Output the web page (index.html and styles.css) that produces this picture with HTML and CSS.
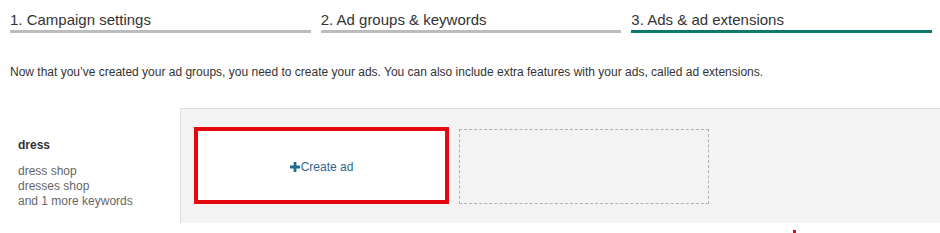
FILE: index.html
```html
<!DOCTYPE html>
<html lang="en">

<head>
    <meta charset="UTF-8">
    <meta name="viewport" content="width=device-width, initial-scale=1.0">
    <title>Ads &amp; ad extensions</title>
    <link rel="stylesheet" href="styles.css">
</head>

<body>
    <!-- start steps -->
    <div class="steps">
        <div class="step">1. Campaign settings</div>
        <div class="step">2. Ad groups &amp; keywords</div>
        <div class="step active">3. Ads &amp; ad extensions</div>
    </div>
    <!-- end steps -->

    <p class="intro">Now that you&rsquo;ve created your ad groups, you need to create your ads. You can also include extra features with your ads, called ad extensions.</p>

    <!-- start ad group row -->
    <div class="group-row">
        <div class="group-info">
            <div class="group-name">dress</div>
            <div class="keywords">
                dress shop<br>
                dresses shop<br>
                and 1 more keywords
            </div>
        </div>
        <div class="ad-panel">
            <div class="ad-card create">
                <span class="create-link">
                    <svg class="plus" width="10" height="10" viewBox="0 0 10 10">
                        <path d="M3.6 0h2.8v3.6H10v2.8H6.4V10H3.6V6.4H0V3.6h3.6z" fill="#1f6a94" />
                    </svg>Create ad
                </span>
            </div>
            <div class="ad-card empty"></div>
        </div>
    </div>
    <!-- end ad group row -->

    <span class="arrow-tip"></span>
</body>

</html>
```

FILE: styles.css
```css
* {
  box-sizing: border-box;
  font-family: Arial, 'Liberation Sans', sans-serif;
}

body {
  margin: 0;
  padding: 0 8px 0 10px;
  color: #333;
  background: #fff;
  position: relative;
  height: 233px;
  overflow: hidden;
}

.steps {
  display: flex;
  gap: 10px;
  width: 922px;
  padding-top: 11px;
}

.step {
  flex: 1;
  font-size: 15px;
  line-height: 18px;
  color: #333;
  padding-bottom: 1px;
  border-bottom: 3px solid #bcbcbc;
}

.step.active {
  border-bottom-color: #0b7a6b;
}

.intro {
  margin: 32px 0 0 0;
  font-size: 12px;
  line-height: 14px;
  color: #333;
}

.group-row {
  display: flex;
  margin-top: 29px;
  margin-left: -10px;
  margin-right: -8px;
}

.group-info {
  width: 180px;
  padding: 30px 0 0 18px;
}

.group-name {
  font-size: 12px;
  font-weight: bold;
  line-height: 14px;
  color: #333;
}

.keywords {
  margin-top: 12px;
  font-size: 12px;
  line-height: 15px;
  color: #666;
}

.ad-panel {
  flex: 1;
  height: 115px;
  background: #f3f3f3;
  border-top: 1px solid #dedede;
  border-left: 1px solid #dedede;
  display: flex;
  align-items: flex-start;
  gap: 10px;
  padding: 18px 0 0 13px;
}

.ad-card {
  width: 250px;
  height: 75px;
}

.ad-card.create {
  width: 255px;
  height: 77px;
  background: #fff;
  border: 4px solid #e4080c;
  display: flex;
  align-items: center;
  justify-content: center;
  padding-top: 2px;
}

.ad-card.empty {
  margin-top: 2px;
  border: 1px dashed #b0b0b0;
}

.create-link {
  font-size: 12px;
  color: #2f6890;
  display: inline-flex;
  align-items: center;
  cursor: pointer;
}

.plus {
  margin-right: 1px;
}

.arrow-tip {
  position: absolute;
  left: 793px;
  top: 230px;
  width: 3px;
  height: 3px;
  background: #e4080c;
}
```
